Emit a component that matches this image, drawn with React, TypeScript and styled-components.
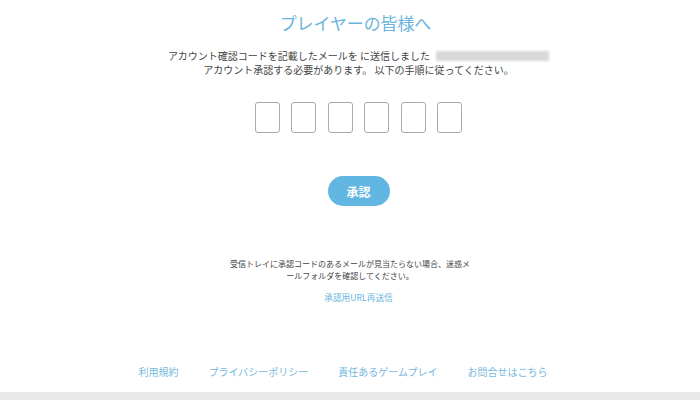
import styled, { createGlobalStyle } from 'styled-components';

const GlobalStyle = createGlobalStyle`
  html, body {
    margin: 0;
    padding: 0;
    background: #ffffff;
  }
  body {
    font-family: "Noto Sans CJK JP", "Noto Sans", sans-serif;
  }
`;

const Page = styled.div`
  display: flex;
  flex-direction: column;
  align-items: center;
  height: 400px;
  overflow: hidden;
`;

// the form block sits a little right of the page centre in the original
const FormSection = styled.section`
  display: flex;
  flex-direction: column;
  align-items: center;
  padding-left: 17px;
`;

const HelpSection = styled.section`
  display: flex;
  flex-direction: column;
  align-items: center;
  margin-top: 52px;
`;

const Title = styled.h1`
  margin: 12px 0 0 -6px;
  font-size: 16.9px;
  line-height: 22px;
  font-weight: 400;
  color: #6ab5dc;
`;

const Message = styled.p`
  margin: 15px 0 0;
  font-size: 10px;
  line-height: 13.5px;
  color: #444444;
  text-align: center;
`;

const HiddenEmail = styled.span`
  display: inline-block;
  width: 113px;
  height: 10px;
  margin-left: 6px;
  vertical-align: -1px;
  background: #d9d9d9;
  filter: blur(1.2px);
`;

const CodeRow = styled.div`
  display: flex;
  gap: 11.5px;
  margin-top: 26px;
`;

const CodeBox = styled.input`
  box-sizing: border-box;
  width: 25px;
  height: 31px;
  padding: 0;
  border: 1px solid #a9a9a9;
  border-radius: 3px;
  background: #ffffff;
  text-align: center;
  font-size: 14px;
  outline: none;
`;

const ConfirmButton = styled.button`
  margin-top: 43px;
  width: 62px;
  height: 30px;
  border: none;
  border-radius: 15px;
  background: #62b6e2;
  color: #ffffff;
  font-family: inherit;
  font-size: 12px;
  font-weight: 700;
  cursor: pointer;
`;

const Notice = styled.p`
  margin: 0;
  width: 242px;
  font-size: 8px;
  line-height: 12px;
  color: #444444;
  text-align: center;
`;

const ResendLink = styled.a`
  margin-top: 10px;
  margin-left: 17px;
  font-size: 8.7px;
  line-height: 12px;
  color: #6ab5dc;
  text-decoration: none;
  cursor: pointer;
`;

const Footer = styled.nav`
  display: flex;
  gap: 30px;
  margin-top: auto;
  margin-bottom: 13px;
  padding-right: 14px;
`;

const FooterLink = styled.a`
  font-size: 10px;
  line-height: 14px;
  color: #76b9dc;
  text-decoration: none;
  cursor: pointer;
`;

const BottomBar = styled.div`
  align-self: stretch;
  height: 8px;
  background: #e9e9e9;
`;

const footerLinks = ['利用規約', 'プライバシーポリシー', '責任あるゲームプレイ', 'お問合せはこちら'];

const App = () => {
  return (
    <>
      <GlobalStyle />
      <Page>
        <FormSection>
          <Title>プレイヤーの皆様へ</Title>
          <Message>
            アカウント確認コードを記載したメールを に送信しました
            <HiddenEmail />
            <br />
            アカウント承認する必要があります。 以下の手順に従ってください。
          </Message>
          <CodeRow>
            {Array.from({ length: 6 }).map((_, i) => (
              <CodeBox key={i} maxLength={1} />
            ))}
          </CodeRow>
          <ConfirmButton>承認</ConfirmButton>
        </FormSection>
        <HelpSection>
          <Notice>受信トレイに承認コードのあるメールが見当たらない場合、迷惑メールフォルダを確認してください。</Notice>
          <ResendLink>承認用URL再送信</ResendLink>
        </HelpSection>
        <Footer>
          {footerLinks.map((label) => (
            <FooterLink key={label}>{label}</FooterLink>
          ))}
        </Footer>
        <BottomBar />
      </Page>
    </>
  );
};

export default App;
